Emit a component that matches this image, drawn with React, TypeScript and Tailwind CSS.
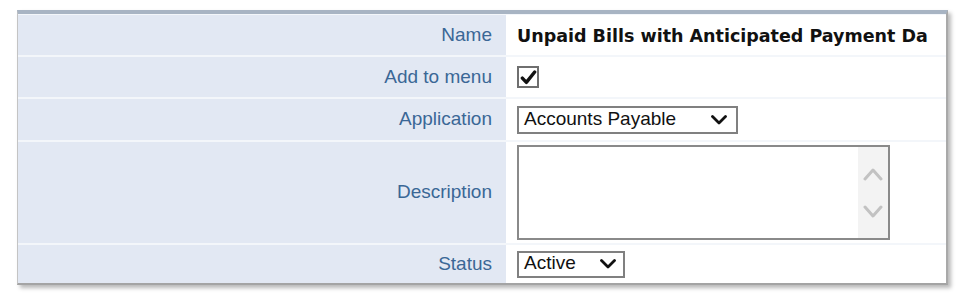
import React from 'react';

const labelFont = { fontFamily: '"Liberation Sans", Arial, sans-serif' };

function Chevron({ className }: { className?: string }) {
  return (
    <svg viewBox="0 0 16 10" className={className} fill="none" stroke="currentColor" strokeWidth="2.8" strokeLinecap="round" strokeLinejoin="round">
      <path d="M1.5 1.5 L8 8 L14.5 1.5" />
    </svg>
  );
}

function Row({ label, height, children }: { label: string; height: string; children: React.ReactNode }) {
  return (
    <div className={`flex ${height}`}>
      <div className="w-[488px] shrink-0 bg-[#e2e8f3] flex items-center justify-end pr-[14px] text-[19px] text-[#3a6796]">
        {label}
      </div>
      <div className="flex-1 bg-white flex items-center pl-[11px] overflow-hidden">{children}</div>
    </div>
  );
}

export default function App() {
  return (
    <div className="w-[974px] h-[308px] bg-white pt-[10px] pl-[17px]" style={labelFont}>
      <div className="w-[931px] border-t-4 border-t-[#a8b4c3] border-l border-l-[#c4c4c4] border-r-2 border-r-[#a9a9a9] border-b-2 border-b-[#a4a4a4] shadow-[3px_3px_4px_rgba(0,0,0,0.28)] bg-[#f3f6fa] pt-px flex flex-col gap-[2px]">
        {/* Name */}
        <Row label="Name" height="h-[40px]">
          <span className="text-[17.5px] font-bold text-[#111] whitespace-nowrap pt-[3px]" style={{ fontFamily: '"DejaVu Sans", Verdana, sans-serif' }}>
            Unpaid Bills with Anticipated Payment Da
          </span>
        </Row>

        {/* Add to menu */}
        <Row label="Add to menu" height="h-[40px]">
          <div className="w-[22px] h-[22px] border-2 border-[#6f6f6f] bg-white flex items-center justify-center">
            <svg viewBox="0 0 16 16" className="w-[17px] h-[17px]" fill="none" stroke="#111" strokeWidth="3.2" strokeLinecap="round" strokeLinejoin="round">
              <path d="M2.2 8.6 L6 12.6 L13.8 2.8" />
            </svg>
          </div>
        </Row>

        {/* Application */}
        <Row label="Application" height="h-[41px]">
          <div className="w-[221px] h-[28px] border-2 border-[#808080] bg-white flex items-center justify-between pl-[5px] pr-[9px] text-[19px] text-[#111]">
            <span>Accounts Payable</span>
            <Chevron className="w-[16px] h-[10px] text-[#111]" />
          </div>
        </Row>

        {/* Description */}
        <Row label="Description" height="h-[101px]">
          <div className="w-[373px] h-[95px] border-2 border-[#8a8a8a] bg-white flex justify-end">
            <div className="w-[30px] h-full bg-[#f3f3f3] flex flex-col items-center justify-center gap-[24px]">
              <svg viewBox="0 0 20 14" className="w-[20px] h-[14px]" fill="none" stroke="#c2c2c2" strokeWidth="3" strokeLinecap="round" strokeLinejoin="round">
                <path d="M2 12 L10 3 L18 12" />
              </svg>
              <svg viewBox="0 0 20 14" className="w-[20px] h-[14px]" fill="none" stroke="#c2c2c2" strokeWidth="3" strokeLinecap="round" strokeLinejoin="round">
                <path d="M2 2 L10 11 L18 2" />
              </svg>
            </div>
          </div>
        </Row>

        {/* Status */}
        <Row label="Status" height="h-[38px]">
          <div className="w-[108px] h-[27px] border-2 border-[#808080] bg-white flex items-center justify-between pl-[5px] pr-[7px] text-[19px] text-[#111] leading-none">
            <span className="pb-[3px]">Active</span>
            <Chevron className="w-[16px] h-[10px] text-[#111]" />
          </div>
        </Row>
      </div>
    </div>
  );
}
